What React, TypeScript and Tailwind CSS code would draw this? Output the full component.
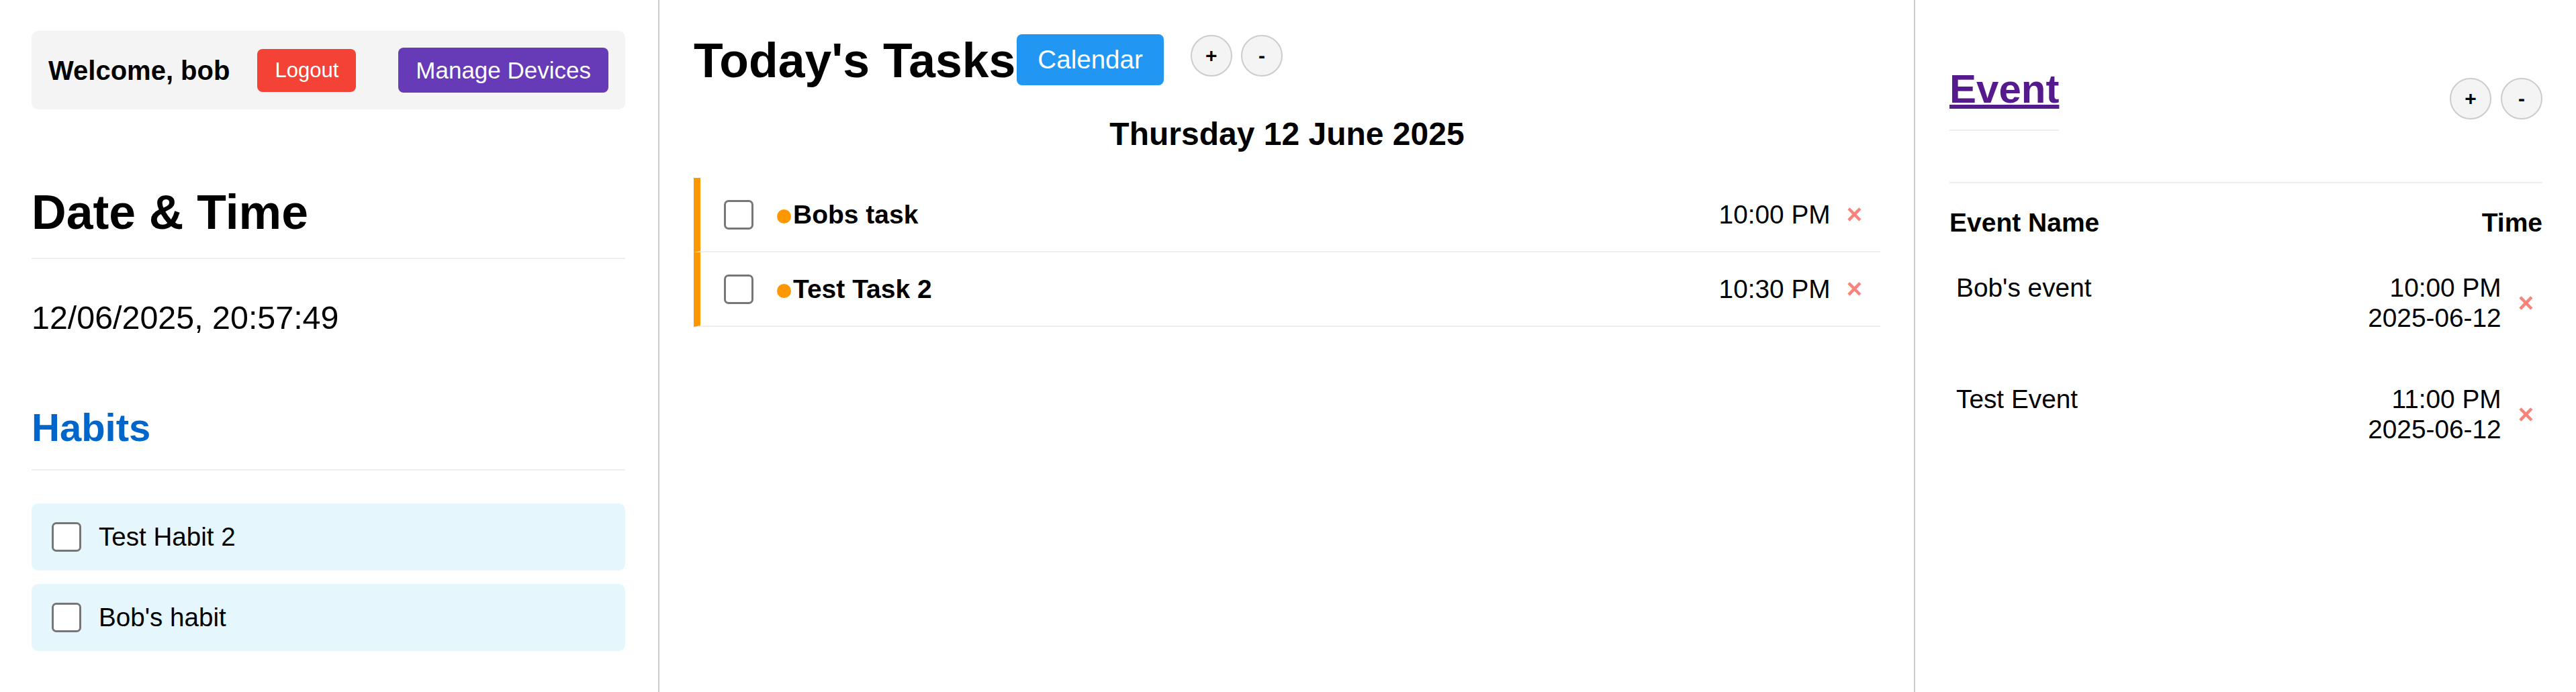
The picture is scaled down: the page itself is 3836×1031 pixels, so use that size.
import React from "react";

const Box = () => (
  <span className="block w-[44px] h-[44px] shrink-0 rounded-[7px] border-[3px] border-[#767676] bg-white" />
);

const Circle = ({ label, className = "" }: { label: string; className?: string }) => (
  <button
    className={`flex items-center justify-center w-[62px] h-[62px] shrink-0 rounded-full border-2 border-[#ccc] bg-[#f4f4f4] text-[30px] font-bold leading-none text-black ${className}`}
  >
    {label}
  </button>
);

const tasks = [
  { name: "Bobs task", time: "10:00 PM" },
  { name: "Test Task 2", time: "10:30 PM" },
];

const events = [
  { name: "Bob's event", time: "10:00 PM", date: "2025-06-12" },
  { name: "Test Event", time: "11:00 PM", date: "2025-06-12" },
];

export default function App() {
  return (
    <div className="flex h-[1031px] w-[3836px] bg-white text-black font-['Liberation_Sans',Arial,sans-serif] overflow-hidden">
      {/* Left column */}
      <div className="w-[982px] shrink-0 border-r-2 border-[#ccc] pl-[47px] pr-[49px] pt-[46px]">
        <div className="flex items-center h-[117px] rounded-[10px] bg-[#f4f4f4] px-[25px]">
          <span className="text-[40px] font-bold leading-[46px] mr-[41px]">Welcome, bob</span>
          <button className="h-[64px] rounded-[8px] bg-[#f44336] px-[26px] text-[31px] leading-[36px] text-white">
            Logout
          </button>
          <button className="ml-auto h-[67px] rounded-[8px] bg-[#673ab7] px-[26px] text-[35px] leading-[40px] text-white">
            Manage Devices
          </button>
        </div>

        <h2 className="mt-[112px] text-[71.5px] font-bold leading-[82px] pb-[27px] border-b-2 border-[#eee]">
          Date &amp; Time
        </h2>
        <div className="mt-[60px] text-[48.4px] leading-[55px]">12/06/2025, 20:57:49</div>

        <h2 className="mt-[102px] text-[58px] font-bold leading-[67px] text-[#0066cc] pb-[29px] border-b-2 border-[#eee]">
          Habits
        </h2>
        <div className="mt-[49px] flex flex-col gap-[20px]">
          {["Test Habit 2", "Bob's habit"].map((h) => (
            <div key={h} className="flex items-center h-[100px] rounded-[10px] bg-[#e5f6fd] pl-[30px]">
              <Box />
              <span className="ml-[26px] text-[38.6px] leading-[44px]">{h}</span>
            </div>
          ))}
        </div>
      </div>

      {/* Middle column */}
      <div className="flex-1 border-r-2 border-[#ccc] pl-[51px] pr-[50px] pt-[50px]">
        <div className="flex items-start">
          <h1 className="text-[71.5px] font-bold leading-[80px]">Today's Tasks</h1>
          <button className="ml-[2px] mt-[1px] h-[76px] rounded-[8px] bg-[#2196f3] px-[31px] text-[38.6px] leading-[44px] text-white">
            Calendar
          </button>
          <Circle label="+" className="ml-[40px] mt-[2px]" />
          <Circle label="-" className="ml-[13px] mt-[2px]" />
        </div>

        <div className="mt-[42px] text-center text-[48px] font-bold leading-[55px]">
          Thursday 12 June 2025
        </div>

        <div className="mt-[38px]">
          {tasks.map((t) => (
            <div
              key={t.name}
              className="flex items-center border-l-[10px] border-b-2 border-l-[#ff9800] border-b-[#eee] py-[32px] pl-[35px] pr-[27px]"
            >
              <Box />
              <span className="ml-[35px] text-[39px] font-bold leading-[45px]">
                <span className="inline-block w-[21px] h-[21px] rounded-full bg-[#ff9800] mr-[3px]" />
                {t.name}
              </span>
              <span className="ml-auto flex items-baseline">
                <span className="text-[38.8px] leading-[45px]">{t.time}</span>
                <span className="ml-[24px] text-[40px] font-bold leading-[45px] text-[#f7837b]">×</span>
              </span>
            </div>
          ))}
        </div>
      </div>

      {/* Right column */}
      <div className="w-[984px] shrink-0 pl-[51px] pr-[50px]">
        <div className="flex items-center justify-between pt-[98px] pb-[76px] border-b-2 border-[#eee]">
          <h2 className="pb-[26px] border-b-2 border-[#eee] text-[60px] font-bold leading-[69px]">
            <a className="text-[#551a8b] underline decoration-[6px] underline-offset-[3px]" href="#">
              Event
            </a>
          </h2>
          <div className="flex">
            <Circle label="+" />
            <Circle label="-" className="ml-[14px]" />
          </div>
        </div>

        <div className="mt-[37px] flex justify-between text-[39px] font-bold leading-[44px]">
          <span>Event Name</span>
          <span>Time</span>
        </div>

        {events.map((e, i) => (
          <div key={e.name} className={`flex items-center ${i === 0 ? "mt-[52px]" : "mt-[76px]"}`}>
            <span className="self-start pl-[10px] text-[38.8px] leading-[45px]">{e.name}</span>
            <div className="ml-auto text-right text-[38.8px] leading-[45px]">
              <div>{e.time}</div>
              <div>{e.date}</div>
            </div>
            <span className="ml-[25px] mr-[13px] text-[40px] font-bold leading-[40px] text-[#f7837b]">×</span>
          </div>
        ))}
      </div>
    </div>
  );
}
